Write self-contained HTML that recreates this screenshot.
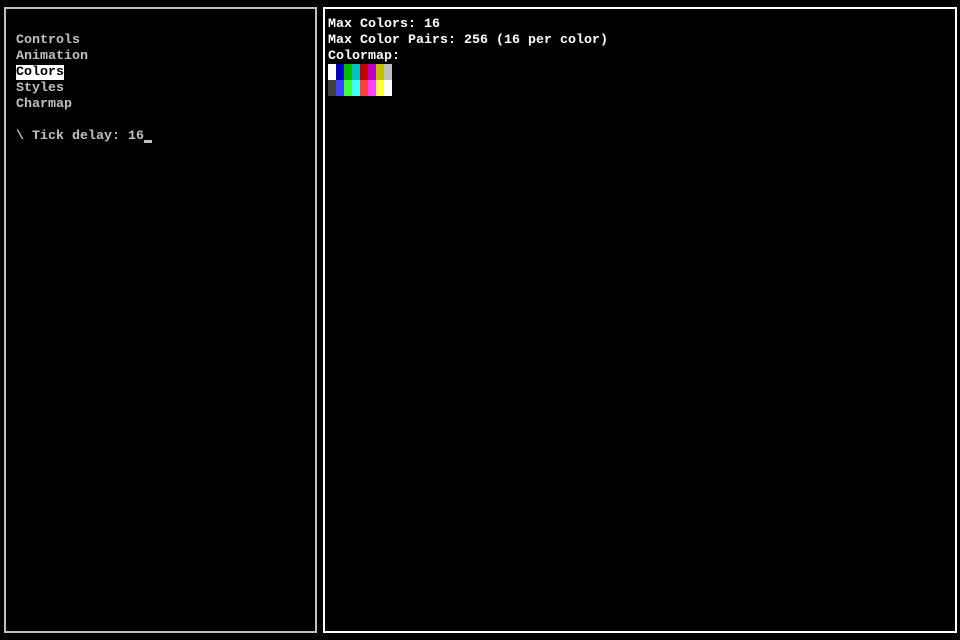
<!DOCTYPE html>
<html><head><style>
body{margin:0;width:960px;height:640px;background:#000;overflow:hidden;position:relative;font-family:"Liberation Mono",monospace;font-size:13.33px;line-height:16px;}
.box{position:absolute;box-sizing:border-box;border:2px solid #c0c0c0;}
.t{position:absolute;white-space:pre;}
.g{color:#c0c0c0;font-weight:bold}
.w{color:#fff;font-weight:bold}
.s{position:absolute;width:8px;height:16px}
</style></head><body>
<div class="box" style="left:4px;top:7px;width:313px;height:626px"></div>
<div class="box" style="left:323px;top:7px;width:634px;height:626px;border-color:#fff"></div>
<div class="t g" style="left:16px;top:33px">Controls
Animation
<span style="background:#fff;color:#000;font-weight:bold">Colors</span>
Styles
Charmap

\ Tick delay: 16</div>
<div style="position:absolute;left:144px;top:140px;width:8px;height:3px;background:#c0c0c0"></div>
<div class="t w" style="left:328px;top:17px">Max Colors: 16
Max Color Pairs: 256 (16 per color)
Colormap:</div>
<div class="s" style="left:328px;top:64px;background:#fff"></div>
<div class="s" style="left:336px;top:64px;background:#0000c0"></div>
<div class="s" style="left:344px;top:64px;background:#00c000"></div>
<div class="s" style="left:352px;top:64px;background:#00c0c0"></div>
<div class="s" style="left:360px;top:64px;background:#c00000"></div>
<div class="s" style="left:368px;top:64px;background:#c000c0"></div>
<div class="s" style="left:376px;top:64px;background:#c0c000"></div>
<div class="s" style="left:384px;top:64px;background:#c0c0c0"></div>
<div class="s" style="left:328px;top:80px;background:#404040"></div>
<div class="s" style="left:336px;top:80px;background:#4040ff"></div>
<div class="s" style="left:344px;top:80px;background:#40ff40"></div>
<div class="s" style="left:352px;top:80px;background:#40ffff"></div>
<div class="s" style="left:360px;top:80px;background:#ff4040"></div>
<div class="s" style="left:368px;top:80px;background:#ff40ff"></div>
<div class="s" style="left:376px;top:80px;background:#ffff40"></div>
<div class="s" style="left:384px;top:80px;background:#fff"></div>
</body></html>
